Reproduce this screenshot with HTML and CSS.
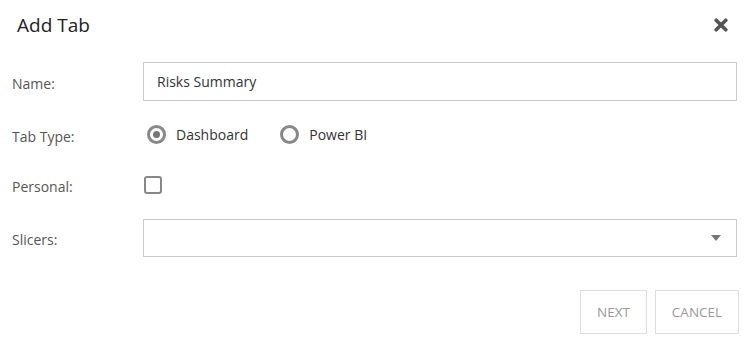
FILE: index.html
```html
<!DOCTYPE html>
<html>
<head>
<meta charset="utf-8">
<link rel="stylesheet" href="styles.css">
</head>
<body>
<div class="dialog">
  <div class="header">
    <h1 class="title">Add Tab</h1>
    <button class="close" aria-label="Close">
      <svg width="14" height="14" viewBox="0 0 14 14"><path d="M2.2 2.2 L11.8 11.8 M11.8 2.2 L2.2 11.8" stroke="#555" stroke-width="3.6" stroke-linecap="round"/></svg>
    </button>
  </div>
  <div class="form">
    <div class="row row-name">
      <label class="label">Name:</label>
      <div class="input">Risks Summary</div>
    </div>
    <div class="row row-type">
      <label class="label">Tab Type:</label>
      <div class="radios">
        <span class="radio checked"></span><span class="radio-text">Dashboard</span>
        <span class="radio second"></span><span class="radio-text">Power BI</span>
      </div>
    </div>
    <div class="row row-personal">
      <label class="label">Personal:</label>
      <span class="checkbox"></span>
    </div>
    <div class="row row-slicers">
      <label class="label">Slicers:</label>
      <div class="select"><span class="caret"></span></div>
    </div>
  </div>
  <div class="footer">
    <button class="btn btn-next">NEXT</button>
    <button class="btn btn-cancel">CANCEL</button>
  </div>
</div>
</body>
</html>
```
FILE: styles.css
```css
html, body {
  margin: 0;
  padding: 0;
  background: #fff;
}
body {
  font-family: "Open Sans", "Noto Sans", sans-serif;
  color: #444;
}
.dialog {
  width: 747px;
  height: 342px;
  box-sizing: border-box;
}
.header {
  display: flex;
  align-items: center;
  justify-content: space-between;
  height: 50px;
  padding: 0 19px 0 17px;
}
.title {
  margin: 0;
  font-size: 19px;
  font-weight: 400;
  color: #222;
}
.close {
  border: 0;
  background: none;
  padding: 0;
  width: 14px;
  height: 14px;
  display: flex;
}
.form {
  padding: 12px 10px 0 12px;
}
.row {
  display: flex;
  align-items: center;
}
.label {
  width: 131px;
  flex: none;
  font-size: 14px;
  color: #555;
  padding-top: 3px;
}
.row-name { height: 39px; }
.row-type { height: 39px; margin-top: 14px; }
.row-personal { height: 40px; margin-top: 11px; }
.row-slicers { height: 38px; margin-top: 14px; }
.input, .select {
  flex: 1;
  height: 100%;
  box-sizing: border-box;
  border: 1px solid #ccc;
  display: flex;
  align-items: center;
}
.input {
  padding-left: 13px;
  font-size: 14px;
  color: #333;
}
.select {
  justify-content: flex-end;
  padding-right: 15px;
}
.caret {
  width: 0;
  height: 0;
  border-left: 5.5px solid transparent;
  border-right: 5.5px solid transparent;
  border-top: 6px solid #777;
}
.radios {
  display: flex;
  align-items: center;
}
.radio {
  width: 19px;
  height: 19px;
  box-sizing: border-box;
  border: 3px solid #888;
  border-radius: 50%;
  margin-left: 4px;
  display: flex;
  align-items: center;
  justify-content: center;
}
.radio.checked::after {
  content: "";
  width: 7px;
  height: 7px;
  border-radius: 50%;
  background: #777;
}
.radio.second {
  margin-left: 32px;
}
.radio-text {
  margin-left: 10px;
  font-size: 14px;
  color: #333;
}
.checkbox {
  width: 18px;
  height: 18px;
  box-sizing: border-box;
  border: 2px solid #888;
  border-radius: 3px;
  margin-left: 1px;
}
.footer {
  display: flex;
  justify-content: flex-end;
  gap: 8px;
  margin-top: 33px;
  padding-right: 8px;
}
.btn {
  height: 44px;
  box-sizing: border-box;
  border: 1px solid #ddd;
  background: #fff;
  font-family: "Open Sans", "Noto Sans", sans-serif;
  font-size: 13.5px;
  color: #999;
  padding: 0;
}
.btn-next { width: 67px; }
.btn-cancel { width: 84px; }
```
